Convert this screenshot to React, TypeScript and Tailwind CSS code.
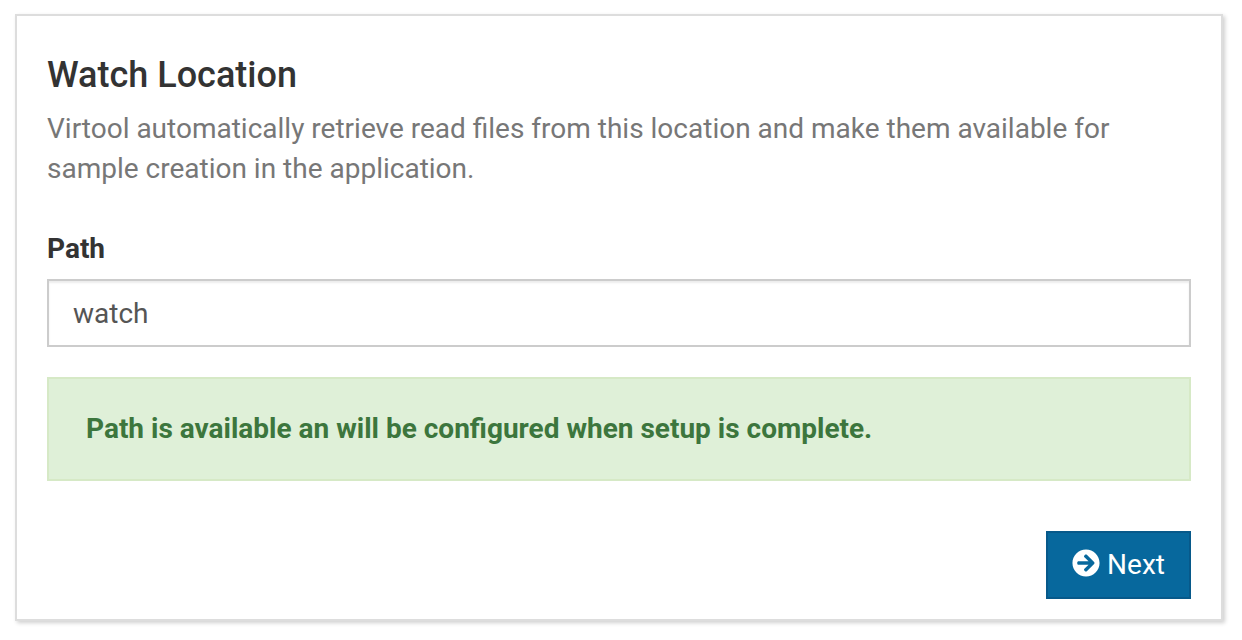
import { useState } from "react";
import { FaArrowCircleRight } from "react-icons/fa";

export default function App() {
  const [path, setPath] = useState("watch");

  return (
    <main className="pt-[14px] pr-[19px] pb-[18px] pl-[15px] font-['Roboto',sans-serif] text-[28px] leading-10 text-[#333333]">
      <form
        className="border-2 border-[#dddddd] bg-white px-[30px] pt-[39px] pb-5 shadow-[2px_2px_4px_#d0d0d0]"
        onSubmit={(event) => event.preventDefault()}
      >
        <h1 className="text-[36px] leading-10 font-medium">Watch Location</h1>
        <p className="mt-[14px] text-[#777777]">
          Virtool automatically retrieve read files from this location and make them available for sample creation in
          the application.
        </p>
        <label htmlFor="path" className="mt-10 block font-bold">
          Path
        </label>
        <input
          id="path"
          type="text"
          value={path}
          onChange={(event) => setPath(event.target.value)}
          className="mt-[10px] block h-[68px] w-full border-2 border-[#cccccc] bg-white px-6 text-[#555555] shadow-[inset_0_2px_2px_rgba(0,0,0,0.075)] outline-none"
        />
        <div role="status" className="mt-[30px] border-2 border-[#d6e9c6] bg-[#dff0d8] px-[37px] py-[30px] font-bold text-[#3c763d]">
          Path is available an will be configured when setup is complete.
        </div>
        <div className="mt-[50px] flex justify-end">
          <button
            type="submit"
            className="h-[68px] border-2 border-[#07598a] bg-[#07689d] px-6 text-white"
          >
            <FaArrowCircleRight aria-hidden="true" className="inline align-[-3px]" /> Next
          </button>
        </div>
      </form>
    </main>
  );
}
